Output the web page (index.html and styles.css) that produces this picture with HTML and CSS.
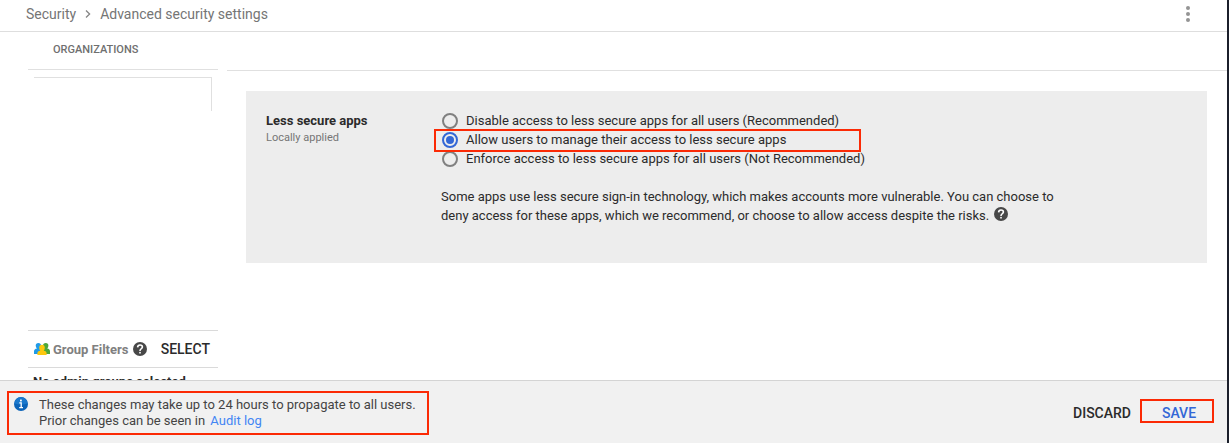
FILE: index.html
```html
<!DOCTYPE html>
<html lang="en">
<head>
<meta charset="utf-8">
<title>Advanced security settings</title>
<link rel="stylesheet" href="styles.css">
</head>
<body>
<header class="topbar">
  <nav class="crumbs">
    <a href="#">Security</a>
    <svg class="chevron" width="6" height="8" viewBox="0 0 6 8"><path d="M1 0.5 L4.6 4 L1 7.5" fill="none" stroke="#858585" stroke-width="1.3"/></svg>
    <span>Advanced security settings</span>
  </nav>
  <button class="more" aria-label="More options">
    <svg width="4" height="16" viewBox="0 0 4 16" fill="#949494"><circle cx="2" cy="2" r="2"/><circle cx="2" cy="8" r="2"/><circle cx="2" cy="14" r="2"/></svg>
  </button>
</header>

<div class="page">
  <aside class="sidebar">
    <h2 class="org-title">ORGANIZATIONS</h2>
    <div class="org-tree"></div>
    <div class="filters">
      <svg class="people" width="16" height="12" viewBox="0 0 16 12">
        <path d="M0 11 V8.5 Q0 6 3 5.6 Q1.7 4.6 1.7 2.6 Q1.7 0 4.4 0 Q7 0 7 2.6 Q7 4.6 6 5.6 L8 7 V11 Z" fill="#209be8"/>
        <path d="M16 11 V8.5 Q16 6 13.2 5.6 Q14.4 4.6 14.4 2.6 Q14.4 0 11.8 0 Q9 0 9 2.6 Q9 4.6 10 5.6 L8 7 V11 Z" fill="#4da83b"/>
        <path d="M3.4 12 V10.4 Q3.4 8.2 6.3 7.8 Q5.2 6.7 5.2 4.7 Q5.2 1.8 8 1.8 Q10.8 1.8 10.8 4.7 Q10.8 6.7 9.7 7.8 Q12.6 8.2 12.6 10.4 V12 Z" fill="#fcc80e"/>
      </svg>
      <span class="filters-name">Group Filters</span>
      <svg class="help" width="14" height="14" viewBox="0 0 14 14"><circle cx="7" cy="7" r="7" fill="#484848"/><path d="M4.6 5.4 Q4.7 3 7 3 Q9.4 3 9.4 5 Q9.4 6 8.1 6.9 Q7 7.6 7 8.9" fill="none" stroke="#fff" stroke-width="1.6"/><rect x="6.2" y="9.9" width="1.6" height="1.6" fill="#fff"/></svg>
      <button class="text-button">SELECT</button>
    </div>
    <p class="groups">No admin groups selected</p>
  </aside>

  <main class="content">
    <section class="card">
      <div class="setting">
        <h3>Less secure apps</h3>
        <p>Locally applied</p>
      </div>
      <div class="options">
        <label class="option"><input type="radio" name="access">Disable access to less secure apps for all users (Recommended)</label>
        <label class="option marked"><input type="radio" name="access" checked>Allow users to manage their access to less secure apps</label>
        <label class="option"><input type="radio" name="access">Enforce access to less secure apps for all users (Not Recommended)</label>
        <p class="hint">Some apps use less secure sign-in technology, which makes accounts more vulnerable. You can choose to deny access for these apps, which we recommend, or choose to allow access despite the risks.
          <svg class="help" width="14" height="14" viewBox="0 0 14 14"><circle cx="7" cy="7" r="7" fill="#484848"/><path d="M4.6 5.4 Q4.7 3 7 3 Q9.4 3 9.4 5 Q9.4 6 8.1 6.9 Q7 7.6 7 8.9" fill="none" stroke="#fff" stroke-width="1.6"/><rect x="6.2" y="9.9" width="1.6" height="1.6" fill="#fff"/></svg></p>
      </div>
    </section>
  </main>
</div>

<footer class="savebar">
  <div class="notice">
    <svg class="info" width="14" height="14" viewBox="0 0 14 14"><circle cx="7" cy="7" r="7" fill="#0b63b8"/><path d="M0.6 6.5 A6.4 6.4 0 0 1 13.4 6.5 Q7 8.5 0.6 6.5 Z" fill="#1a78cc"/><path d="M5.3 5.8 H7.2 V10.6 M5.2 10.7 H9" fill="none" stroke="#fff" stroke-width="1.3"/><rect x="6" y="2.6" width="1.8" height="1.8" fill="#fff"/></svg>
    <p>These changes may take up to 24 hours to propagate to all users.<br>Prior changes can be seen in <a href="#">Audit log</a></p>
  </div>
  <div class="actions">
    <button class="text-button">DISCARD</button>
    <button class="text-button save">SAVE</button>
  </div>
</footer>
</body>
</html>
```
FILE: styles.css
```css
* {
  box-sizing: border-box;
}
body {
  margin: 0;
  height: 100vh;
  display: flex;
  flex-direction: column;
  border-right: 2px solid #1b1f2b;
  background-color: #fff;
  font-family: Roboto, Arial, sans-serif;
  font-size: 13px;
  color: #2b2b2b;
}
h2, h3, p {
  margin: 0;
}
button {
  border: 0;
  padding: 0;
  background: none;
  font-family: inherit;
  cursor: pointer;
}

.topbar {
  flex: none;
  display: flex;
  justify-content: space-between;
  align-items: center;
  height: 32px;
  padding: 0 37px 4px 26px;
  border-bottom: 1px solid #dedede;
}
.crumbs {
  display: flex;
  align-items: center;
  font-size: 14px;
  line-height: 20px;
  color: #757575;
}
.crumbs a {
  color: inherit;
  text-decoration: none;
}
.chevron {
  margin: 0 9px;
}
.more {
  display: flex;
}

.page {
  flex: 1;
  min-height: 0;
  display: flex;
  gap: 9px;
  padding-left: 28px;
  overflow: hidden;
}
.sidebar {
  flex: none;
  width: 190px;
  display: flex;
  flex-direction: column;
}
.org-title {
  flex: none;
  height: 38px;
  padding-left: 25px;
  border-bottom: 1px solid #e0e0e0;
  font-size: 11px;
  font-weight: 500;
  line-height: 35px;
  color: #6f6f6f;
}
.org-tree {
  flex: none;
  height: 34px;
  margin: 7px 6px 0;
  border-top: 1px solid #e0e0e0;
  border-right: 1px solid #e0e0e0;
}
.filters {
  flex: none;
  display: flex;
  align-items: center;
  height: 38px;
  margin-top: auto;
  padding: 0 8px 0 6px;
  border-top: 1px solid #dadada;
  border-bottom: 1px solid #dadada;
}
.filters-name {
  margin: 0 5px 0 3px;
  font-weight: 700;
  color: #808080;
}
.text-button {
  font-size: 14px;
  font-weight: 500;
  line-height: 16px;
  color: #2b2b2b;
}
.filters .text-button {
  margin-left: auto;
}
.groups {
  flex: none;
  height: 12px;
  padding: 6px 0 0 5px;
  font-weight: 700;
  line-height: 16px;
  white-space: nowrap;
}

.content {
  flex: 1;
  margin-top: 38px;
  padding: 20px 20px 0 19px;
  border-top: 1px solid #e0e0e0;
}
.card {
  display: flex;
  min-height: 172px;
  padding: 20px;
  background-color: #ededed;
}
.setting {
  flex: none;
  width: 175px;
}
.setting h3 {
  font-size: 13px;
  font-weight: 700;
  line-height: 19px;
}
.setting p {
  font-size: 11px;
  line-height: 16px;
  color: #757575;
}
.options {
  max-width: 620px;
}
.option {
  display: flex;
  align-items: center;
  gap: 8px;
  width: fit-content;
  height: 19px;
}
.option input {
  appearance: none;
  flex: none;
  width: 16px;
  height: 16px;
  margin: 0 0 0 1px;
  padding: 2px;
  border: 2px solid #808080;
  border-radius: 50%;
}
.option input:checked {
  border-color: #3367d6;
  background-color: #3367d6;
  background-clip: content-box;
}
/* red callout boxes */
.marked {
  position: relative;
  width: 420px;
}
.marked::after {
  content: "";
  position: absolute;
  inset: -1px 0 -3px -7px;
  border: 2px solid #fb2a05;
}
.hint {
  margin-top: 19px;
  line-height: 19px;
}
.hint .help {
  margin-left: 2px;
  vertical-align: -1px;
}

.savebar {
  flex: none;
  display: flex;
  justify-content: space-between;
  height: 63px;
  padding: 10px 13px 8px 7px;
  border-top: 1px solid #d4d4d4;
  background-color: #f1f1f1;
}
.notice {
  display: flex;
  gap: 11px;
  width: 422px;
  padding: 4px 5px;
  border: 2px solid #fb2a05;
  color: #444;
}
.notice p {
  line-height: 16px;
}
.notice a {
  margin-left: 2px;
  color: #4285f4;
  text-decoration: none;
}
.actions {
  display: flex;
  align-items: baseline;
  gap: 9px;
  padding-top: 8px;
}
.save {
  width: 74px;
  height: 24px;
  padding: 4px 0 0 4px;
  border: 2px solid #fb2a05;
  color: #3367d6;
}
```
